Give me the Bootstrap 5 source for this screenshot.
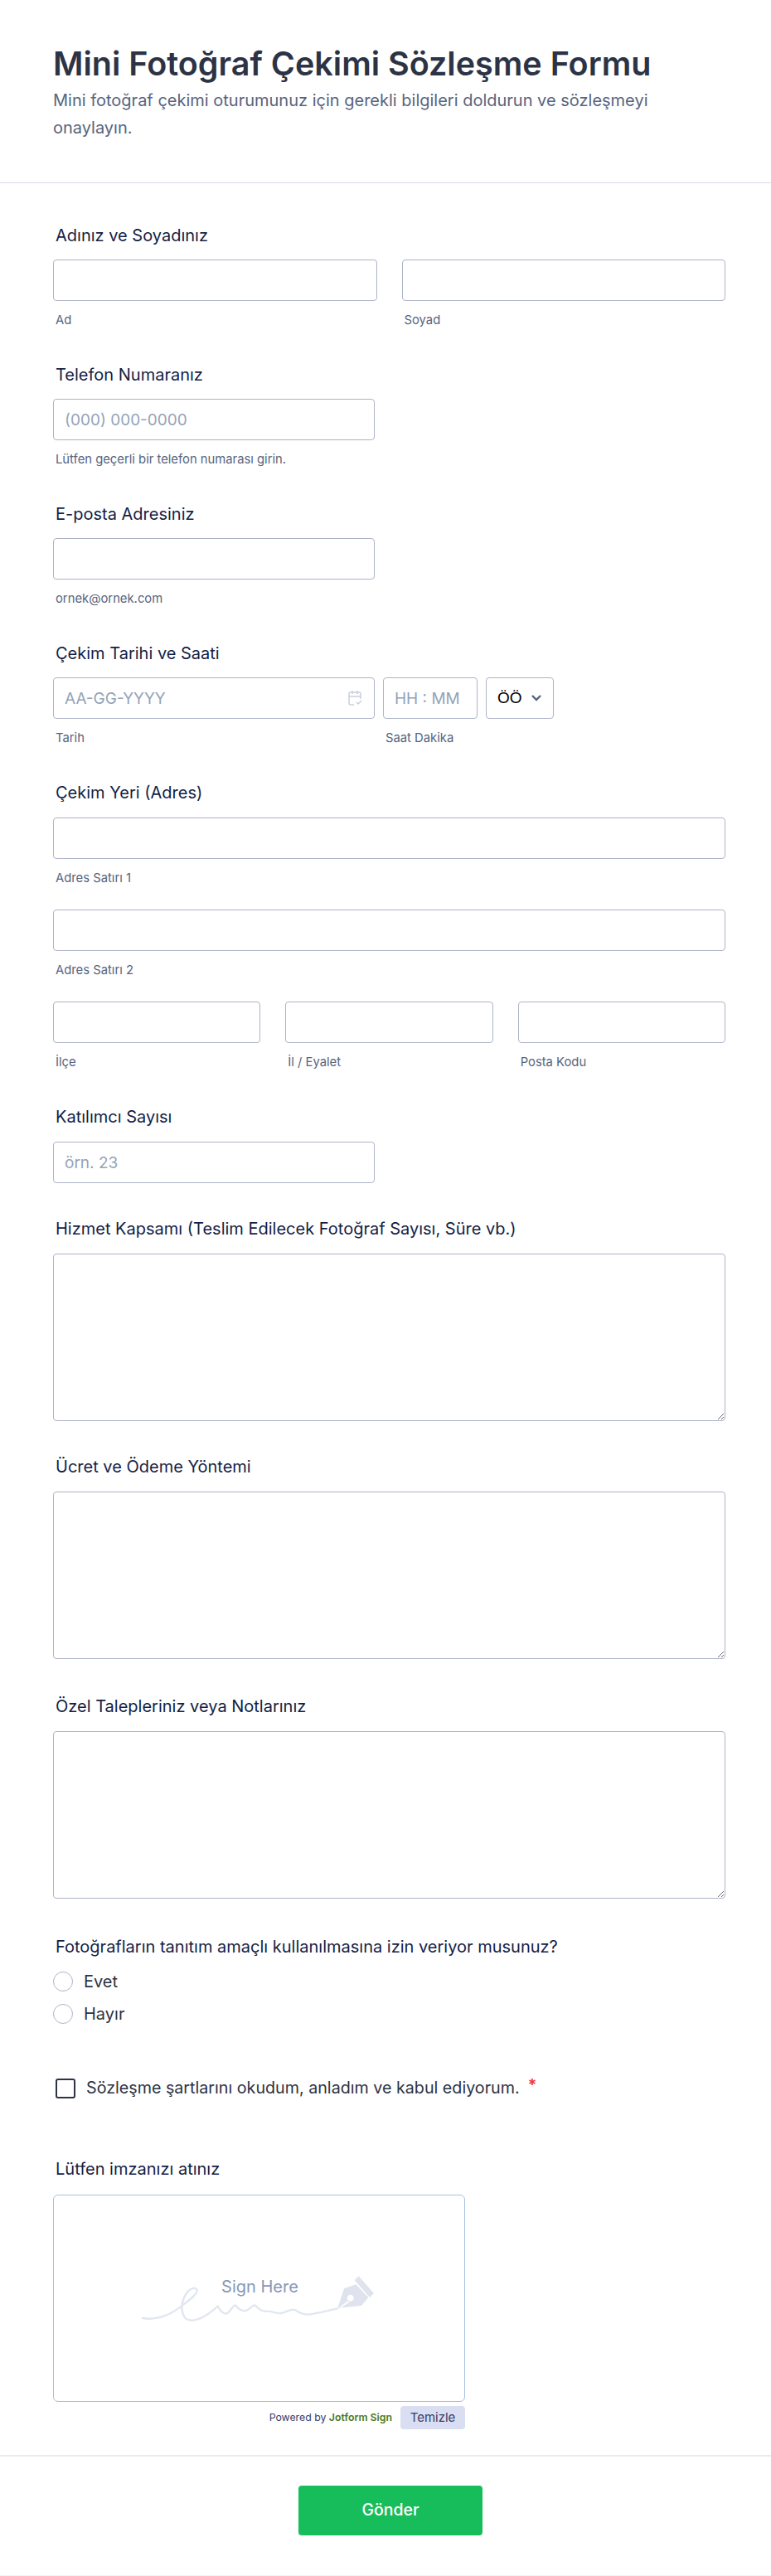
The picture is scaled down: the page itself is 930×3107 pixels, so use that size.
<!DOCTYPE html>
<html lang="tr">
<head>
  <meta charset="UTF-8">
  <title>Mini Fotoğraf Çekimi Sözleşme Formu</title>
  <meta name="viewport" content="width=device-width, initial-scale=1">
  <link href="https://cdn.jsdelivr.net/npm/bootstrap@5.3.3/dist/css/bootstrap.min.css" rel="stylesheet">
  <style>
    body {
      background: #fff;
      font-family: Inter, "Noto Sans", sans-serif;
      color: #2c3345;
    }
    .form-head {
      height: 221px;
      padding: 51px 64px 0;
      border-bottom: 1px solid #d8dae9;
    }
    .form-head h1 {
      font-size: 39.5px;
      line-height: 52px;
      font-weight: 600;
      margin: 0 0 2px;
      color: #2c3345;
    }
    .form-head p {
      font-size: 20px;
      line-height: 33px;
      color: #57647e;
      margin: 0;
    }
    .form-body {
      padding: 51px 55px 0 64px;
    }
    .field {
      margin-bottom: 44px;
    }
    .field-title {
      display: block;
      font-size: 20px;
      line-height: 24px;
      font-weight: 400;
      color: #141e46;
      margin: 0 0 17px 3px;
    }
    .title-wide {
      margin-bottom: 18px;
    }
    .form-control, .form-select {
      height: 50px;
      border: 1px solid #aeb4c8;
      border-radius: 4px;
      font-size: 19px;
      padding: 0 13px;
      color: #000;
    }
    .form-control::placeholder {
      color: #94a3b8;
    }
    textarea.form-control {
      height: 202px;
    }
    .sub-text {
      display: block;
      font-size: 14.8px;
      line-height: 20px;
      color: #57647e;
      margin: 13px 0 0 3px;
    }
    .short-input {
      width: 388px;
    }
    .gap-row {
      gap: 30px;
    }
    .gap-row > div {
      flex: 1 1 0;
    }
    .addr-line {
      margin-bottom: 28px;
    }
    .gap-43 {
      margin-bottom: 43px;
    }
    .gap-45 {
      margin-bottom: 45px;
    }
    .gap-46 {
      margin-bottom: 46px;
    }
    .gap-66 {
      margin-bottom: 66px;
    }
    .gap-73 {
      margin-bottom: 73px;
    }
    .date-wrap {
      width: 388px;
      position: relative;
    }
    .date-wrap svg {
      position: absolute;
      right: 14px;
      top: 15px;
    }
    .time-col {
      width: 114px;
      margin-left: 10px;
    }
    .ampm-col {
      width: 82px;
      margin-left: 10px;
    }
    .ampm-col .form-select {
      padding: 0 0 0 13px;
      background-position: right 13px center;
      background-size: 14px 10px;
      background-image: url("data:image/svg+xml,%3csvg xmlns='http://www.w3.org/2000/svg' viewBox='0 0 14 10'%3e%3cpath fill='none' stroke='%2357647e' stroke-width='2.4' d='M2 2l5 5 5-5'/%3e%3c/svg%3e");
      font-family: "Liberation Sans", sans-serif;
      font-size: 19px;
    }
    .opt-row {
      display: flex;
      align-items: center;
      height: 24px;
      margin-bottom: 15px;
      font-size: 20px;
      color: #2c3345;
    }
    .opt-row input {
      appearance: none;
      width: 24px;
      height: 24px;
      margin: 0 13px 0 0;
      background: #fff;
      border: 1px solid #aeb4c8;
      border-radius: 50%;
    }
    .terms-row {
      display: flex;
      align-items: center;
      margin: 0 0 0 3px;
      height: 24px;
      font-size: 19.7px;
      color: #2c3345;
    }
    .terms-row input {
      appearance: none;
      width: 24px;
      height: 24px;
      margin: 0 13px 0 0;
      background: #fff;
      border: 2px solid #2c3345;
      border-radius: 3px;
    }
    .req-star {
      color: #f23a3c;
      font-weight: 700;
      margin: -6px 0 0 10px;
    }
    .sign-wrap {
      width: 497px;
    }
    .sign-title {
      margin-bottom: 19px;
    }
    .sign-box {
      height: 250px;
      border: 1px solid #a9bfe0;
      border-radius: 6px;
      padding: 37px 4px 0 0;
    }
    .sign-art {
      position: relative;
      width: 320px;
      height: 140px;
    }
    .sign-art span {
      position: absolute;
      left: 6px;
      right: 0;
      top: 24px;
      text-align: center;
      font-size: 20px;
      line-height: 26px;
      color: #8797b5;
    }
    .sign-foot {
      margin-top: 5px;
      font-size: 12.3px;
      color: #343c6a;
    }
    .sign-foot b {
      font-weight: 600;
      color: #4b7a1c;
    }
    .clear-btn {
      width: 78px;
      height: 28px;
      margin-left: 10px;
      padding: 0;
      border: 0;
      border-radius: 4px;
      background: #dadef3;
      color: #343c6a;
      font-size: 15px;
    }
    .form-foot {
      margin-top: 31px;
      height: 146px;
      border-top: 2px solid #eaebf2;
      padding-top: 35px;
      border-bottom: 1px solid #f3f3fe;
    }
    .send-btn {
      display: block;
      width: 222px;
      height: 60px;
      margin-left: 360px;
      padding: 0;
      border: 0;
      border-radius: 4px;
      background: #18bd5b;
      color: #fff;
      font-size: 19.5px;
      font-weight: 500;
    }
  </style>
</head>
<body>

  <!-- Title -->
  <div class="form-head">
    <h1>Mini Fotoğraf Çekimi Sözleşme Formu</h1>
    <p>Mini fotoğraf çekimi oturumunuz için gerekli bilgileri doldurun ve sözleşmeyi onaylayın.</p>
  </div>

  <form class="form-body">

    <div class="field">
      <label class="field-title">Adınız ve Soyadınız</label>
      <div class="d-flex gap-row">
        <div><input type="text" class="form-control"><span class="sub-text">Ad</span></div>
        <div><input type="text" class="form-control"><span class="sub-text">Soyad</span></div>
      </div>
    </div>

    <div class="field">
      <label class="field-title">Telefon Numaranız</label>
      <input type="text" class="form-control short-input" placeholder="(000) 000-0000">
      <span class="sub-text">Lütfen geçerli bir telefon numarası girin.</span>
    </div>

    <div class="field">
      <label class="field-title">E-posta Adresiniz</label>
      <input type="text" class="form-control short-input">
      <span class="sub-text">ornek@ornek.com</span>
    </div>

    <div class="field">
      <label class="field-title">Çekim Tarihi ve Saati</label>
      <div class="d-flex">
        <div class="date-wrap">
          <input type="text" class="form-control" placeholder="AA-GG-YYYY">
          <svg width="20" height="20" viewBox="0 0 20 20" fill="none" stroke="#c9cfdb" stroke-width="1.5">
            <path d="M9 18H5a2 2 0 0 1-2-2V5a2 2 0 0 1 2-2h10a2 2 0 0 1 2 2v6M3 8h14M7 1v4M13 1v4"/>
            <path d="M12 15l2 2 4-4"/>
          </svg>
          <span class="sub-text">Tarih</span>
        </div>
        <div class="time-col">
          <input type="text" class="form-control" placeholder="HH : MM">
          <span class="sub-text">Saat Dakika</span>
        </div>
        <div class="ampm-col">
          <select class="form-select"><option>ÖÖ</option><option>ÖS</option></select>
        </div>
      </div>
    </div>

    <div class="field">
      <label class="field-title title-wide">Çekim Yeri (Adres)</label>
      <div class="addr-line">
        <input type="text" class="form-control">
        <span class="sub-text">Adres Satırı 1</span>
      </div>
      <div class="addr-line">
        <input type="text" class="form-control">
        <span class="sub-text">Adres Satırı 2</span>
      </div>
      <div class="d-flex gap-row">
        <div><input type="text" class="form-control"><span class="sub-text">İlçe</span></div>
        <div><input type="text" class="form-control"><span class="sub-text">İl / Eyalet</span></div>
        <div><input type="text" class="form-control"><span class="sub-text">Posta Kodu</span></div>
      </div>
    </div>

    <div class="gap-43">
      <label class="field-title title-wide">Katılımcı Sayısı</label>
      <input type="text" class="form-control short-input" placeholder="örn. 23">
    </div>

    <div class="gap-43">
      <label class="field-title title-wide">Hizmet Kapsamı (Teslim Edilecek Fotoğraf Sayısı, Süre vb.)</label>
      <textarea class="form-control"></textarea>
    </div>

    <div class="gap-45">
      <label class="field-title title-wide">Ücret ve Ödeme Yöntemi</label>
      <textarea class="form-control"></textarea>
    </div>

    <div class="gap-46">
      <label class="field-title title-wide">Özel Talepleriniz veya Notlarınız</label>
      <textarea class="form-control"></textarea>
    </div>

    <div class="gap-66">
      <label class="field-title title-wide">Fotoğrafların tanıtım amaçlı kullanılmasına izin veriyor musunuz?</label>
      <label class="opt-row"><input type="radio" name="izin">Evet</label>
      <label class="opt-row"><input type="radio" name="izin">Hayır</label>
    </div>

    <div class="gap-73">
      <label class="terms-row"><input type="checkbox">Sözleşme şartlarını okudum, anladım ve kabul ediyorum.<span class="req-star">*</span></label>
    </div>

    <div>
      <label class="field-title sign-title">Lütfen imzanızı atınız</label>
      <div class="sign-wrap">
        <div class="sign-box d-flex justify-content-center align-items-center">
          <div class="sign-art">
            <svg width="320" height="140" viewBox="0 0 960 420" fill="none">
              <path d="M63 225C100 232 150 222 195 188C230 160 262 140 260 122C255 112 235 115 222 135C205 160 198 195 215 222C235 245 280 232 335 182C342 195 352 212 368 208C380 203 388 180 398 178C410 190 420 200 435 198C450 195 458 180 468 178C480 185 490 203 510 200C530 197 545 210 565 207C585 203 600 190 615 195C630 205 640 212 665 212C700 208 735 197 768 190" stroke="#e1e6f0" stroke-width="7" stroke-linecap="round"/>
              <path fill="#dfe3ed" fill-rule="evenodd" d="M769 188L792 118L835 103L880 150L855 180ZM815 140a12 12 0 1 0 0.1 0ZM806 163L776 185L782 186L811 167Z"/>
              <path fill="#dfe3ed" d="M845 73L900 135L885 150L830 88Z"/>
            </svg>
            <span>Sign Here</span>
          </div>
        </div>
        <div class="sign-foot d-flex justify-content-end align-items-center">
          <span>Powered by <b>Jotform Sign</b></span>
          <button type="button" class="clear-btn">Temizle</button>
        </div>
      </div>
    </div>
  </form>

  <div class="form-foot">
    <button type="button" class="send-btn">Gönder</button>
  </div>

  <script src="https://cdn.jsdelivr.net/npm/bootstrap@5.3.3/dist/js/bootstrap.bundle.min.js"></script>
</body>
</html>
